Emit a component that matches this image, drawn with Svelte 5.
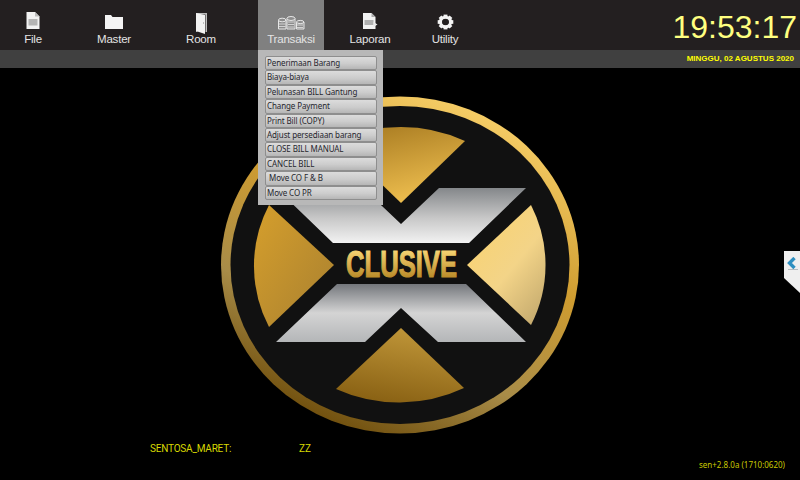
<script>
  // gap = space left of each tab, the tabs are not evenly spaced
  const nav = [
    { label: 'File', icon: 'file', gap: 0 },
    { label: 'Master', icon: 'folder', gap: 15 },
    { label: 'Room', icon: 'door', gap: 21 },
    { label: 'Transaksi', icon: 'coins', gap: 24, active: true },
    { label: 'Laporan', icon: 'report', gap: 13 },
    { label: 'Utility', icon: 'gear', gap: 9 }
  ];

  const items = [
    'Penerimaan Barang',
    'Biaya-biaya',
    'Pelunasan BILL Gantung',
    'Change Payment',
    'Print Bill (COPY)',
    'Adjust persediaan barang',
    'CLOSE BILL MANUAL',
    'CANCEL BILL',
    ' Move CO F & B',
    'Move CO PR'
  ];

  const teeth = [0, 45, 90, 135, 180, 225, 270, 315];
</script>

<div class="screen">
  <header class="topbar">
    <nav class="nav">
      {#each nav as n}
        <div class="nav-item" class:active={n.active} style="margin-left: {n.gap}px">
          <svg class="icon" width="24" height="24" viewBox="0 0 24 24">
            {#if n.icon === 'file'}
              <path d="M5.5 4h8.5l4.5 4.5V21h-13z" fill="#f2f2f2" />
              <path d="M14 4v4.5h4.5z" fill="#bbb" />
              <path d="M7.5 11h9v6.5h-9z" fill="#b4b4b4" />
            {:else if n.icon === 'folder'}
              <path d="M3 7h6l1.5 2H21v12H3z" fill="#f4f4f4" />
            {:else if n.icon === 'door'}
              <path d="M7 5h11v19h-1.5V6.5H8.5V24H7z" fill="#bdbdbd" />
              <path d="M7 5l9 2v19l-9-3z" fill="#f2f2f2" />
              <path d="M14 15h1" stroke="#888" stroke-width="1" />
            {:else if n.icon === 'coins'}
              <g fill="#8c8c8c" stroke="#e6e6e6" stroke-width="1">
                <path d="M-.5 12v9h7.5v-9" />
                <ellipse cx="3.2" cy="12" rx="3.7" ry="1.8" />
                <path d="M8 10.5V21h8V10.5" />
                <ellipse cx="12" cy="10.5" rx="4" ry="2" />
                <path d="M17.5 14v7h7.5v-7" />
                <ellipse cx="21.2" cy="14" rx="3.7" ry="1.6" />
              </g>
              <path d="M0 16h6.5M0 18.5h6.5M9 14h6M9 16.5h6M9 19h6M18 17h6M18 19.5h6" stroke="#e6e6e6" stroke-width=".8" />
            {:else if n.icon === 'report'}
              <path d="M5 5h8.5l4 4v12H5z" fill="#f2f2f2" />
              <path d="M13.5 5v4h4z" fill="#aaa" />
              <path d="M6.5 12h9v5h-9z" fill="#b0b0b0" />
              <path d="M15.5 14l4 2.500-4 2.500z" fill="#e8e8e8" />
            {:else}
              <g fill="#f4f4f4" transform="translate(12.5 14) scale(.78 .74) translate(-12 -12)">
                {#each teeth as t}
                  <rect x="9.5" y="2" width="5" height="5" transform="rotate({t} 12 12)" />
                {/each}
                <circle cx="12" cy="12" r="6.5" fill="none" stroke="#f4f4f4" stroke-width="4" />
              </g>
            {/if}
          </svg>
          <span>{n.label}</span>
        </div>
      {/each}
    </nav>
    <div class="clock">19:53:17</div>
  </header>

  <div class="subbar">MINGGU, 02 AGUSTUS 2020</div>

  <main class="desk">
    <svg class="logo" width="360" height="340" viewBox="220 95 360 340">
      <defs>
        <linearGradient id="ring" x1="0.8" y1="0.05" x2="0.35" y2="1">
          <stop offset="0" stop-color="#f8d06a" />
          <stop offset="0.4" stop-color="#cf9c30" />
          <stop offset="0.72" stop-color="#a88c48" />
          <stop offset="1" stop-color="#6f4e0c" />
        </linearGradient>
        <linearGradient id="wedgeTop" x1="0.2" y1="0" x2="0.6" y2="1">
          <stop offset="0" stop-color="#a97c22" />
          <stop offset="1" stop-color="#f0c050" />
        </linearGradient>
        <linearGradient id="wedgeLeft" x1="0" y1="0" x2="1" y2="1">
          <stop offset="0" stop-color="#d69f2c" />
          <stop offset="1" stop-color="#a88030" />
        </linearGradient>
        <linearGradient id="wedgeRight" x1="0" y1="0" x2="0.8" y2="1">
          <stop offset="0" stop-color="#fad26a" />
          <stop offset="0.6" stop-color="#f3d488" />
          <stop offset="1" stop-color="#c8ad70" />
        </linearGradient>
        <linearGradient id="wedgeBottom" x1="0.7" y1="0" x2="0.4" y2="1">
          <stop offset="0" stop-color="#c2983a" />
          <stop offset="1" stop-color="#8a6214" />
        </linearGradient>
        <linearGradient id="silverTop" x1="0" y1="0" x2="0" y2="1">
          <stop offset="0" stop-color="#84878a" />
          <stop offset="0.55" stop-color="#c8c8c8" />
          <stop offset="1" stop-color="#f2f2f2" />
        </linearGradient>
        <linearGradient id="silverBottom" x1="0" y1="0" x2="0" y2="1">
          <stop offset="0" stop-color="#74777c" />
          <stop offset="0.5" stop-color="#d4d4d4" />
          <stop offset="1" stop-color="#b4b6b8" />
        </linearGradient>
        <linearGradient id="word" gradientUnits="userSpaceOnUse" x1="0" y1="250" x2="0" y2="278">
          <stop offset="0" stop-color="#f7d574" />
          <stop offset="1" stop-color="#b98a28" />
        </linearGradient>
      </defs>
      <ellipse cx="400" cy="265" rx="179" ry="168.5" fill="url(#ring)" />
      <ellipse cx="400" cy="265" rx="169.5" ry="159" fill="#111" />
      <path d="M337 141 A146 138 0 0 1 465 141 L401 203z" fill="url(#wedgeTop)" />
      <path d="M269 205 A146 138 0 0 0 269 327 L334 265z" fill="url(#wedgeLeft)" />
      <path d="M531 205 A146 138 0 0 1 531 325 L467 265z" fill="url(#wedgeRight)" />
      <path d="M336 389 A146 138 0 0 0 464 388 L401 328z" fill="url(#wedgeBottom)" />
      <path d="M276 188 H363 L401 224 L439 188 H526 L469 243 H333z" fill="url(#silverTop)" />
      <path d="M337 284 H466 L526 342 H438 L401 308 L365 342 H276z" fill="url(#silverBottom)" />
      <text class="word" x="346" y="277" textLength="111" lengthAdjust="spacingAndGlyphs" fill="url(#word)" stroke="url(#word)" stroke-width="1.1">CLUSIVE</text>
    </svg>

    <div class="handle">
      <svg width="12" height="14" viewBox="0 0 12 14">
        <path d="M8.5 1 L3.5 6 L8.5 11" fill="none" stroke="#2f8fc0" stroke-width="3.4" />
        <path d="M2 12.5h10" stroke="#b5bcc0" stroke-width="1" />
      </svg>
    </div>

    <div class="footer">
      <div class="company"><span class="site">SENTOSA_MARET:</span><span>ZZ</span></div>
      <div class="version">sen+2.8.0a (1710:0620)</div>
    </div>
  </main>

  <div class="dropdown">
    {#each items as item}
      <div class="menu-btn">{item}</div>
    {/each}
  </div>
</div>

<style>
  :global(body) {
    margin: 0;
    background: #000;
  }

  .screen {
    position: relative;
    width: 800px;
    height: 480px;
    overflow: hidden;
    display: flex;
    flex-direction: column;
    background: #000;
    font-family: "Liberation Sans", Arial, sans-serif;
  }

  .topbar {
    height: 50px;
    flex: none;
    display: flex;
    justify-content: space-between;
    background: #231f20;
  }

  .nav {
    display: flex;
  }

  .nav-item {
    width: 66px;
    height: 50px;
    display: flex;
    flex-direction: column;
    align-items: center;
    color: #e4e4e4;
    font-size: 11.5px;
    letter-spacing: -0.2px;
    line-height: 14px;
  }

  .nav-item .icon {
    margin-top: 8px;
    overflow: visible;
  }

  .nav-item.active {
    background: #808080;
  }

  .clock {
    font-size: 32px;
    line-height: 54px;
    color: #ffff80;
    padding-right: 3px;
  }

  .subbar {
    height: 18px;
    flex: none;
    background: #404040;
    color: #ffff00;
    font-size: 8px;
    font-weight: bold;
    line-height: 17px;
    text-align: right;
    padding-right: 6px;
  }

  .desk {
    position: relative;
    flex: 1;
  }

  .logo {
    position: absolute;
    left: 220px;
    top: 27px;
  }

  .word {
    font-family: "Liberation Sans Narrow", "Liberation Sans", sans-serif;
    font-size: 37px;
    font-weight: bold;
  }

  .handle {
    position: absolute;
    right: 0;
    top: 183px;
    width: 16px;
    height: 42px;
    box-sizing: border-box;
    padding: 6px 0 0 2px;
    background: #efefef;
    clip-path: polygon(0 0, 100% 0, 100% 100%, 0 64%);
  }

  .footer {
    position: absolute;
    left: 150px;
    right: 15px;
    bottom: 10px;
    display: flex;
    justify-content: space-between;
    align-items: flex-end;
    color: #d8d800;
  }

  .company {
    display: flex;
    gap: 66px;
    font-family: Roboto, sans-serif;
    font-size: 10px;
    line-height: 14px;
    margin-bottom: 14px;
  }

  .site {
    width: 83px;
    letter-spacing: -0.2px;
    white-space: nowrap;
  }

  .version {
    font-family: "Noto Sans", sans-serif;
    font-size: 8px;
    line-height: 10px;
    color: #c8c800;
  }

  .dropdown {
    position: absolute;
    left: 258px;
    top: 50px;
    width: 125px;
    height: 155px;
    box-sizing: border-box;
    padding: 6px 6px 0 7px;
    background: #b8b8b8;
  }

  .menu-btn {
    height: 14.4px;
    box-sizing: border-box;
    padding-left: 1px;
    border: 1px solid #8e8e8e;
    border-radius: 2px;
    background: linear-gradient(#dcdcdc, #cccccc 55%, #b6b6b6);
    color: #26262e;
    font-family: "Noto Sans", sans-serif;
    font-size: 8px;
    letter-spacing: -0.1px;
    line-height: 12px;
    white-space: pre;
  }
</style>
